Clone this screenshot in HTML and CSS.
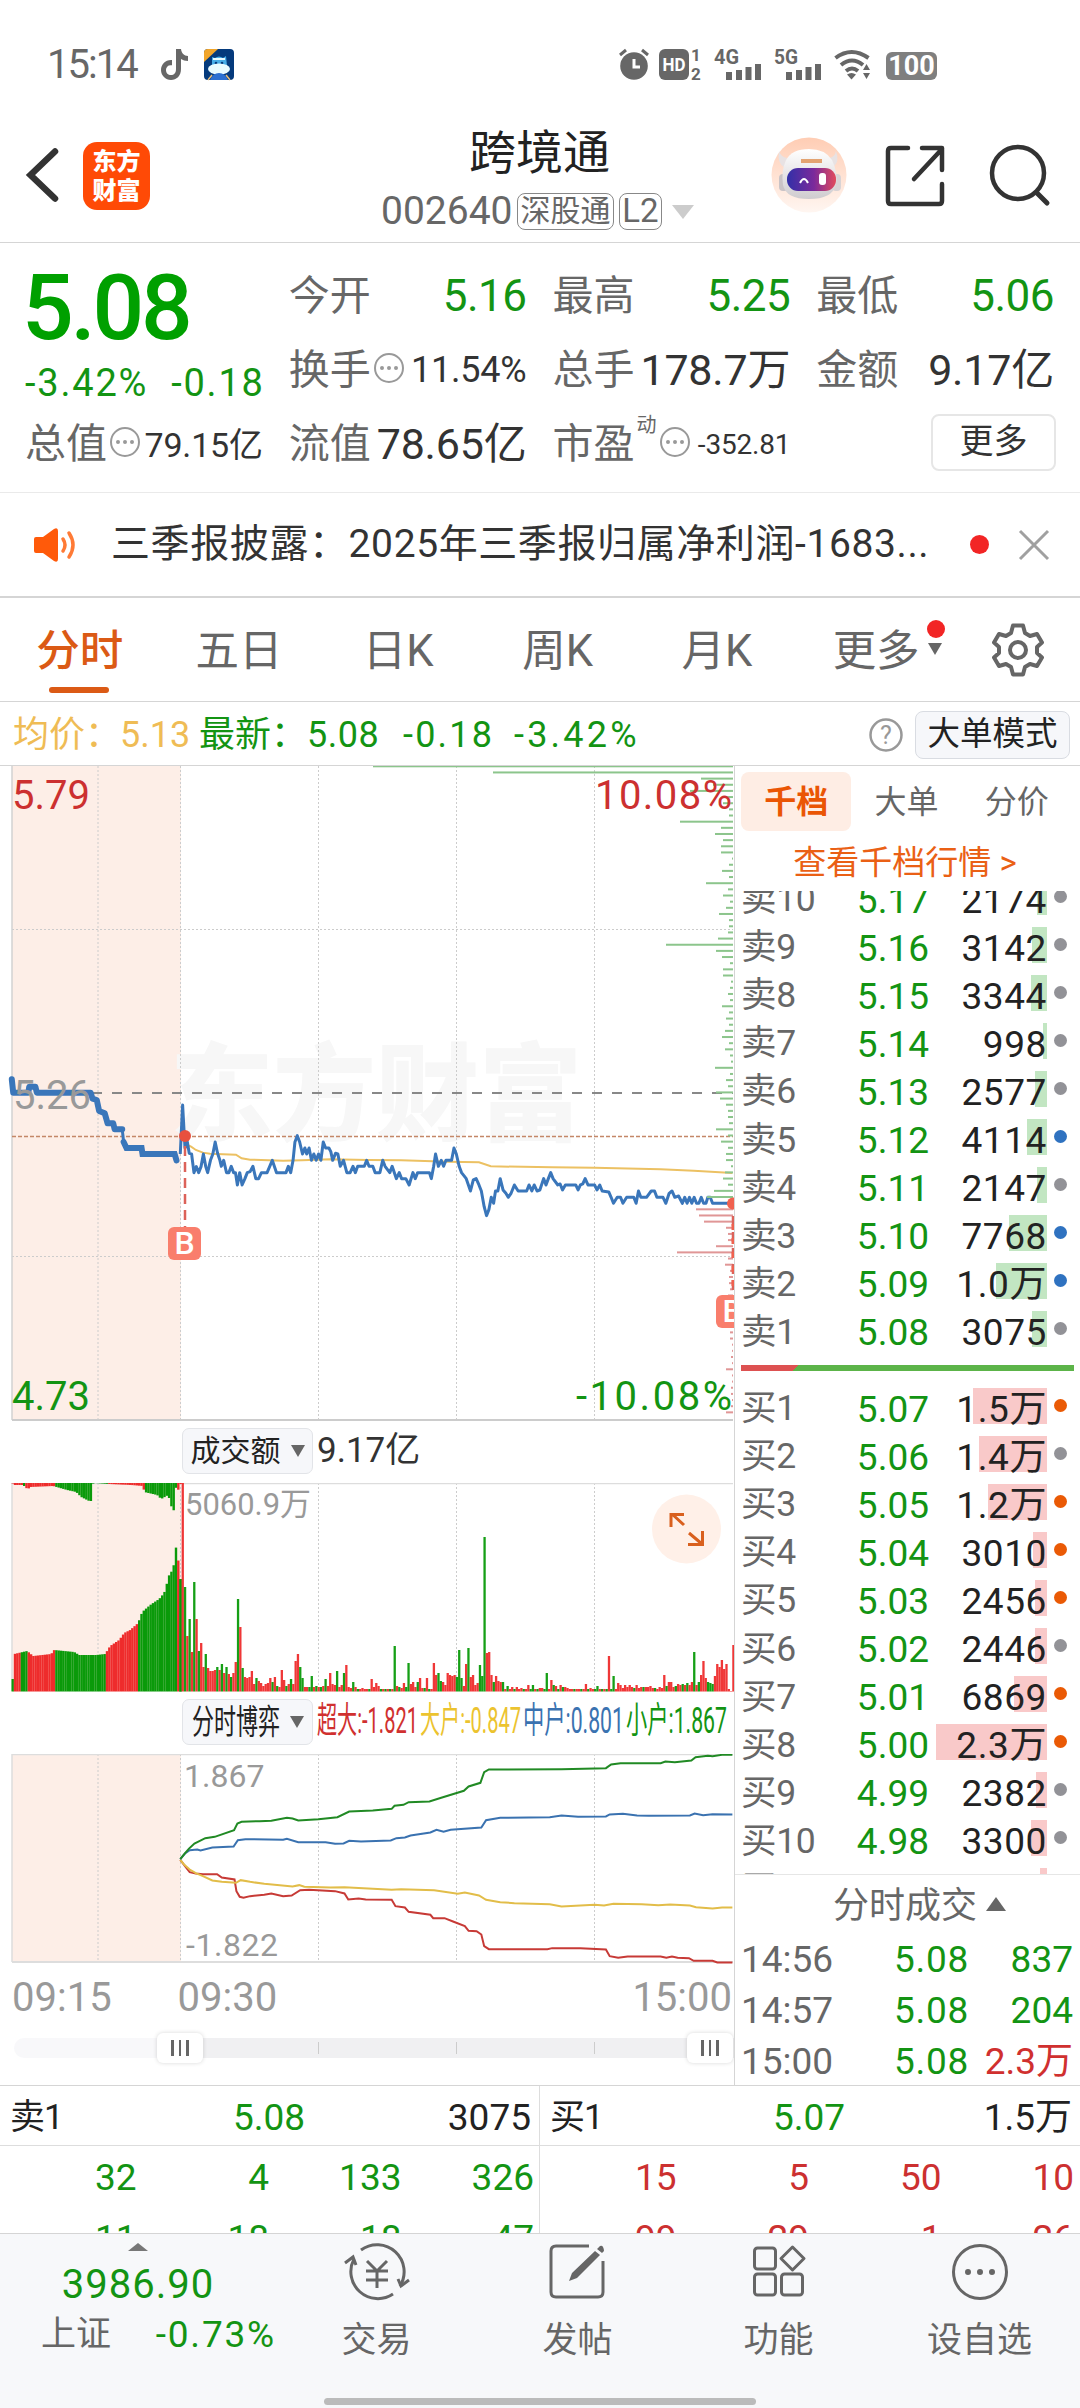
FILE: index.html
```html
<!DOCTYPE html>
<html lang="zh-CN">
<head>
<meta charset="utf-8">
<meta name="viewport" content="width=1080">
<title>跨境通 002640</title>
<link rel="stylesheet" href="styles.css">
</head>
<body>
<div class="status">
  <span class="clock">15:14</span>
  <svg class="tiktok" width="27" height="31" viewBox="0 0 27 31"><path d="M15 0h5c.5 4 3 7 7 7v5c-3 0-5-.7-7-2v10c0 7-4.500 11-10 11S0 26.500 0 21s4.500-10.500 11-10v5.300c-4-.6-6 1.700-6 4.700s2 5 5 5 5-2 5-6z" fill="#676767"/></svg>
  <svg class="mascot" width="30" height="31" viewBox="0 0 30 31"><rect width="30" height="31" rx="4" fill="#053a7c"/><path d="M4 0h10L0 13V4a4 4 0 0 1 4-4z" fill="#f0a52b"/><path d="M8 8l3 1q4-3 8 0l3-2 1 10H8z" fill="#48aee8"/><path d="M9 10h12" stroke="#e9fbff" stroke-width="2"/><circle cx="12" cy="14" r="1.300" fill="#053a7c"/><circle cx="18" cy="14" r="1.300" fill="#053a7c"/><ellipse cx="15" cy="20" rx="11" ry="5.500" fill="#e9fbff"/><path d="M6 31q3-7 9-7t9 7z" fill="#2b6fd0"/><path d="M4 31l4-5M26 31l-4-5" stroke="#e6bd7b" stroke-width="1.500"/></svg>
  <div class="status-right">
    <svg width="30" height="31" viewBox="0 0 30 31"><circle cx="15" cy="17" r="13.800" fill="#676767"/><path d="M1 6l6-5M29 6l-6-5" stroke="#676767" stroke-width="3"/><path d="M15 10v8h6" fill="none" stroke="#fff" stroke-width="3"/></svg>
    <svg width="43" height="31" viewBox="0 0 43 31"><rect width="30" height="31" rx="6" fill="#676767"/><text x="15" y="22" class="hd" textLength="23" lengthAdjust="spacingAndGlyphs">HD</text><text x="37" y="12" class="sim">1</text><text x="37" y="31" class="sim">2</text></svg>
    <svg width="48" height="31" viewBox="0 0 48 31"><text x="0" y="15" class="net" textLength="25" lengthAdjust="spacingAndGlyphs">4G</text><path d="M15 31v-8M25 31v-10M34.500 31v-13M44 31v-16" class="bars"/></svg>
    <svg width="48" height="31" viewBox="0 0 48 31"><text x="0" y="15" class="net" textLength="24" lengthAdjust="spacingAndGlyphs">5G</text><path d="M15 31v-8M25 31v-10M34.500 31v-13M44 31v-16" class="bars"/></svg>
    <svg width="37" height="31" viewBox="0 0 37 31"><path d="M1.500 9q16-12 33 0M7 16q11-9 22 0M12 22q6-5 12 0" fill="none" stroke="#676767" stroke-width="4"/><path d="M13 25.500q4.500-3 9 0l-4.500 5z" fill="#676767"/><path d="M32.500 15l3.500 6h-7zM32.500 30l3.500-6h-7z" fill="#676767"/></svg>
    <div class="battery">100</div>
  </div>
</div>

<header class="head">
  <svg class="back" width="36" height="56" viewBox="0 0 36 56"><path d="M32 4.500L7.500 28 32 51.500" fill="none" stroke="#333" stroke-width="6.500" stroke-linecap="round"/></svg>
  <div class="logo"><span>东方</span><span>财富</span></div>
  <div class="title">
    <h1>跨境通</h1>
    <div class="code"><span class="num">002640</span><span class="tag">深股通</span><span class="tag l2">L2</span><i class="caret"></i></div>
  </div>
  <svg class="robot" width="76" height="78" viewBox="0 0 76 78">
    <defs><linearGradient id="bg" x1="0" y1="0" x2="0" y2="1"><stop offset="0" stop-color="#ffcdb4"/><stop offset="1" stop-color="#fff6f1"/></linearGradient><linearGradient id="visor"><stop offset="0" stop-color="#3230a8"/><stop offset=".55" stop-color="#7b2a9b"/><stop offset="1" stop-color="#e24a5c"/></linearGradient><linearGradient id="shell" x1="0" y1="0" x2="0" y2="1"><stop offset="0" stop-color="#fff"/><stop offset="1" stop-color="#cfcccf"/></linearGradient></defs>
    <circle cx="38" cy="39" r="37.500" fill="url(#bg)"/>
    <path d="M8 15q2 6 8 7l-3 9q-7-4-5-16zM65 15q-1 6-7 7l4 9q7-5 3-16z" fill="#e8e2e3"/>
    <rect x="8" y="38" width="9" height="17" rx="4" fill="#c9c3c6"/><rect x="61" y="38" width="9" height="17" rx="4" fill="#d8d3d5"/>
    <path d="M38 13q16 0 23 11 6 12 4 25-4 14-27 14T12 49q-2-14 3-25 6-11 23-11z" fill="url(#shell)"/>
    <path d="M30 25h21" stroke="#e3a371" stroke-width="4"/>
    <rect x="16" y="32" width="49" height="23" rx="11" fill="url(#visor)"/>
    <path d="M29 47q4-8 8 0" fill="none" stroke="#fff" stroke-width="2"/><rect x="48" y="37" width="7" height="12" rx="3" fill="#fff"/>
  </svg>
  <svg class="share" width="60" height="62" viewBox="0 0 60 62"><path d="M23 3H6q-3 0-3 3v50q0 3 3 3h48q3 0 3-3V39M37 3h20v22M57 4L29 34" fill="none" stroke="#333" stroke-width="4.500" stroke-linecap="round" stroke-linejoin="round"/></svg>
  <svg class="search" width="62" height="64" viewBox="0 0 62 64"><circle cx="29" cy="29" r="26" fill="none" stroke="#333" stroke-width="4.500"/><path d="M48 49l10 10" stroke="#333" stroke-width="5" stroke-linecap="round"/></svg>
</header>

<section class="quote">
  <div class="qcol first">
    <strong class="price">5.08</strong>
    <div class="chg"><span>-3.42%</span><span>-0.18</span></div>
    <div class="cell"><label>总值</label><svg class="more-i" viewBox="0 0 30 30"><circle cx="15" cy="15" r="14"/><path d="M8 15h0M15 15h0M22 15h0"/></svg><b class="s35">79.15亿</b></div>
  </div>
  <div class="qcol">
    <div class="cell"><label>今开</label><b class="g">5.16</b></div>
    <div class="cell"><label>换手</label><svg class="more-i" viewBox="0 0 30 30"><circle cx="15" cy="15" r="14"/><path d="M8 15h0M15 15h0M22 15h0"/></svg><b class="s36">11.54%</b></div>
    <div class="cell"><label>流值</label><b>78.65亿</b></div>
  </div>
  <div class="qcol">
    <div class="cell"><label>最高</label><b class="g">5.25</b></div>
    <div class="cell"><label>总手</label><b>178.7万</b></div>
    <div class="cell"><label>市盈</label><sup>动</sup><svg class="more-i" viewBox="0 0 30 30"><circle cx="15" cy="15" r="14"/><path d="M8 15h0M15 15h0M22 15h0"/></svg><b class="s28">-352.81</b></div>
  </div>
  <div class="qcol">
    <div class="cell"><label>最低</label><b class="g">5.06</b></div>
    <div class="cell"><label>金额</label><b>9.17亿</b></div>
    <div class="cell end"><span class="morebtn">更多</span></div>
  </div>
</section>

<section class="notice">
  <svg width="46" height="36" viewBox="0 0 46 36"><path d="M1 12q0-2 2-2h7L21 2q4-2 4 2v28q0 4-4 2L10 26H3q-2 0-2-2z" fill="#ff5a0a"/><path d="M30 12q4 6 0 12M36 6q8 12 0 24" fill="none" stroke="#ff7a35" stroke-width="3.500" stroke-linecap="round"/></svg>
  <p>三季报披露：2025年三季报归属净利润-1683...</p>
  <i class="dot"></i>
  <svg width="32" height="32" viewBox="0 0 32 32"><path d="M2 2l28 28M30 2L2 30" stroke="#a0a0a0" stroke-width="3"/></svg>
</section>

<nav class="tabs">
  <span class="on">分时</span><span>五日</span><span>日K</span><span>周K</span><span>月K</span><span class="moretab">更多<i class="badge"></i><i class="tri"></i></span>
  <svg width="54" height="54" viewBox="-27 -27 54 54"><path d="M-5-24.500H5L7-17 12-14 19-16 24-7.500 19-3V3L24 7.500 19 16 12 14 7 17 5 24.500H-5L-7 17-12 14-19 16-24 7.500-19 3V-3L-24-7.500-19-16-12-14-7-17z" fill="none" stroke="#666" stroke-width="4" stroke-linejoin="round"/><circle r="8" fill="none" stroke="#666" stroke-width="4"/></svg>
</nav>

<div class="info">
  <span class="avg">均价：</span><span class="avg v1">5.13</span><span class="lat">最新：</span><span class="v2">5.08</span><span class="v3">-0.18</span><span class="v4">-3.42%</span>
  <svg width="34" height="34" viewBox="0 0 34 34"><circle cx="17" cy="17" r="15.500" fill="none" stroke="#999" stroke-width="2.500"/><text x="17" y="26">?</text></svg>
  <span class="mode">大单模式</span>
</div>

<main class="main">
  <div class="charts">
    <svg class="chart" width="735" height="660" viewBox="0 0 735 660">
      <rect x="12" y="0" width="169" height="654" fill="#fdeee7"/>
      <text x="170" y="366" class="mark" textLength="412" lengthAdjust="spacingAndGlyphs">东方财富</text>
      <g class="grid"><path d="M98 0V654M180.500 0V654M318.500 0V654M456.500 0V654M594.500 0V654M12 163.500H733M12 490.500H733"/></g>
      <path d="M12 0V654" stroke="#d2d2d2" stroke-width="1.500"/><path d="M12 654H733" stroke="#ccc" stroke-width="2"/>
      <path d="M92 327H733" stroke="#888" stroke-width="2" stroke-dasharray="10 10"/>
      <path d="M12 370.500H733" stroke="#c48767" stroke-width="1.500" stroke-dasharray="4 2"/>
      <g transform="translate(0 214) scale(.4719 .3333)" class="series">
        <polyline stroke="#ecc163" stroke-width="2" points="392,490 397,495 405,500 415,510 430,518 445,521 500,524 512,535 530,539 600,542 640,541 700,538 780,540 850,541 950,545 1015,547 1040,559 1170,562 1260,563 1400,568 1470,572 1552,579"/>
        <polyline stroke="#3a76ba" stroke-width="6" stroke-linecap="round" stroke-linejoin="round" points="25,298 28,338 60,338 62,320 75,320 78,338 192,338 196,356 205,360 210,393 222,400 228,430 240,430 243,448 259,448"/>
        <polyline stroke="#3a76ba" stroke-width="6" stroke-linecap="round" points="262,486 268,504 300,504 302,522 370,522 374,541"/>
        <polyline stroke="#3a76ba" stroke-width="3" stroke-linejoin="round" points="259,448 262,486 262,486"/>
        <polyline stroke="#3a76ba" stroke-width="3" stroke-linejoin="round" points="382,522 387,375 392,504 397,486 401,520 406,522 411,578 416,560 421,578 426,560 431,522 436,560 440,578 446,541 451,522 456,486 461,520 466,541 469,559 474,541 480,578 485,578 490,559 495,578 499,578 503,615 508,578 513,615 519,596 524,578 530,575 536,559 542,596 548,596 554,578 566,578 577,541 586,578 606,578 611,559 616,578 621,541 625,486 630,467 635,486 641,522 646,504 650,522 655,504 660,541 665,522 670,541 675,522 680,541 685,486 690,504 697,504 701,515 705,541 711,520 716,522 721,559 728,541 735,578 742,578 748,559 753,578 758,559 772,559 777,541 782,559 790,559 795,578 805,578 811,541 816,559 826,578 831,559 840,596 846,578 851,596 860,596 867,615 875,578 880,596 885,578 910,578 914,596 919,559 923,522 929,559 935,541 940,559 945,541 957,541 962,504 967,522 973,559 978,578 988,596 997,633 1003,600 1009,596 1015,615 1020,633 1026,680 1031,707 1036,689 1041,652 1046,670 1050,633 1055,633 1060,596 1066,630 1072,640 1077,652 1083,640 1090,615 1098,633 1116,633 1121,615 1127,633 1132,615 1138,633 1144,630 1152,596 1157,615 1162,596 1167,578 1172,596 1182,615 1187,612 1192,630 1198,615 1220,615 1225,630 1230,615 1235,612 1240,596 1246,615 1260,615 1265,630 1271,615 1276,633 1290,636 1295,652 1300,670 1308,652 1315,652 1320,670 1328,652 1343,652 1348,670 1353,633 1358,652 1370,652 1380,633 1387,633 1392,652 1405,652 1411,670 1418,640 1424,633 1430,652 1438,648 1446,670 1451,652 1456,670 1461,652 1466,670 1471,652 1476,670 1481,670 1486,652 1491,670 1496,670 1500,652 1505,652 1510,670 1552,670"/>
      </g>
      <text x="13" y="343" class="t40" fill="#999">5.26</text>
      <g id="depth"></g>
      <path d="M185 380V461M733 450V528" stroke="#dc6259" stroke-width="2.500" stroke-dasharray="10 6"/>
      <path d="M733 458V520" stroke="#f0614f" stroke-width="3" stroke-dasharray="6 8"/>
      <circle cx="185" cy="370" r="6" fill="#e8503e"/><circle cx="733" cy="437.500" r="6" fill="#f0614f"/>
      <rect x="168" y="461" width="33" height="33" rx="6" fill="#f97e6c"/><text x="184.500" y="488" class="buy">B</text>
      <rect x="716" y="529" width="33" height="33" rx="6" fill="#f97e6c"/><text x="732.500" y="556" class="buy">B</text>
      <text x="12" y="43" class="t40" fill="#cc3030">5.79</text>
      <text x="732" y="43" class="t40 end" fill="#cc3030" textLength="137">10.08%</text>
      <text x="12" y="644" class="t40" fill="#139413">4.73</text>
      <text x="732" y="644" class="t40 end" fill="#139413" textLength="156">-10.08%</text>
    </svg>
    <div class="pick"><span class="btn">成交额<i class="tri"></i></span><span class="amount">9.17亿</span></div>
    <svg class="chart" width="735" height="210" viewBox="0 0 735 210">
      <rect x="12" y="0" width="169" height="208" fill="#fdeee7"/>
      <g class="grid"><path d="M98 0V208M180.500 0V208M318.500 0V208M456.500 0V208M594.500 0V208"/></g>
      <path d="M12 208V.500H733" fill="none" stroke="#ddd" stroke-width="1.500"/>
      <g id="auction"></g><g id="volume"></g>
      <text x="185" y="32" class="t32" textLength="126" lengthAdjust="spacingAndGlyphs">5060.9万</text>
      <circle cx="686.500" cy="46" r="34.500" fill="#fff0e8"/><path d="M684 42L672 31M671 44V31.500H684M689 50L702 61M688 61.500H702.500V48" fill="none" stroke="#d9601e" stroke-width="3"/>
    </svg>
    <div class="pick low"><span class="btn"><svg width="88" height="44" viewBox="0 0 88 44"><text x="0" y="34" font-size="34" fill="#222" textLength="88" lengthAdjust="spacingAndGlyphs">分时博弈</text></svg><i class="tri"></i></span>
      <svg class="legend" width="414" height="44" viewBox="0 0 414 44"><text x="0" y="34" fill="#d0302f" textLength="101" lengthAdjust="spacingAndGlyphs">超大:-1.821</text><text x="103" y="34" fill="#ecc32f" textLength="101" lengthAdjust="spacingAndGlyphs">大户:-0.847</text><text x="206" y="34" fill="#3a72b0" textLength="101" lengthAdjust="spacingAndGlyphs">中户:0.801</text><text x="309" y="34" fill="#139413" textLength="101" lengthAdjust="spacingAndGlyphs">小户:1.867</text></svg></div>
    <svg class="chart" width="735" height="210" viewBox="0 0 735 210">
      <rect x="12" y="0" width="169" height="208" fill="#fdeee7"/>
      <g class="grid"><path d="M98 0V208M180.500 0V208M318.500 0V208M456.500 0V208M594.500 0V208"/></g>
      <path d="M12 208V.500H733" fill="none" stroke="#ddd" stroke-width="1.500"/><path d="M12 208H733" stroke="#ddd" stroke-width="2"/>
      <text x="184" y="33" class="t32">1.867</text><text x="186" y="202" class="t32" textLength="92">-1.822</text>
      <g transform="translate(0 -44.500) scale(.4719 .3333)" class="series" stroke-width="2">
        <polyline stroke="#c73a36" points="382,451 392,470 402,488 415,492 430,494 460,494 470,504 497,510 501,545 508,562 516,565 530,560 560,556 575,552 600,560 618,558 636,542 655,541 710,545 730,552 738,570 760,567 775,570 830,571 838,590 858,594 866,607 912,616 918,626 942,626 960,636 985,650 993,664 1010,665 1020,675 1026,710 1036,719 1160,719 1170,716 1230,716 1284,720 1292,740 1310,745 1330,741 1400,741 1412,745 1424,741 1436,745 1460,746 1470,754 1510,754 1520,759 1552,759"/>
        <polyline stroke="#e2bd49" points="382,451 390,465 402,480 415,491 430,500 450,513 470,517 500,520 510,512 530,517 560,523 620,531 634,527 645,532 700,534 730,533 790,538 830,541 850,539 920,542 970,553 985,549 1015,558 1030,571 1060,578 1090,581 1165,584 1190,591 1260,586 1280,588 1300,583 1360,584 1395,587 1420,585 1462,588 1475,593 1510,597 1530,594 1552,594"/>
        <polyline stroke="#3a72b0" points="382,449 392,432 402,422 418,420 425,423 450,414 495,411 504,392 520,389 600,391 608,388 632,398 690,398 710,403 728,402 740,394 765,396 828,393 840,386 858,384 870,378 912,369 925,361 940,367 955,361 1020,354 1030,332 1060,325 1165,323 1190,318 1225,322 1284,321 1292,315 1320,313 1350,318 1375,319 1462,318 1472,312 1490,317 1510,314 1552,315"/>
        <polyline stroke="#218a24" points="382,449 390,435 400,418 412,402 435,386 455,382 496,362 503,342 512,337 550,335 575,334 608,325 620,327 632,333 675,329 715,323 740,306 790,303 830,298 836,289 855,286 866,278 910,276 935,265 983,244 993,231 1018,220 1026,188 1036,180 1190,179 1284,176 1295,165 1315,161 1400,161 1410,156 1430,158 1465,153 1474,143 1500,139 1510,140 1530,136 1552,136"/>
      </g>
    </svg>
    <div class="axis"><span>09:15</span><span class="mid">09:30</span><span>15:00</span></div>
    <div class="slider"><div class="rail"><i></i><i></i><i></i></div><b class="knob left"><u></u><u></u><u></u></b><b class="knob right"><u></u><u></u><u></u></b></div>
  </div>

  <aside class="book">
    <div class="btabs"><span class="on">千档</span><span>大单</span><span>分价</span></div>
    <div class="link">查看千档行情 &gt;</div>
    <div class="levels sell">
      <div class="lv"><span>卖10</span><b>5.17</b><em>2174</em><i style="width:10px"></i><u></u></div>
      <div class="lv"><span>卖9</span><b>5.16</b><em>3142</em><i style="width:15px"></i><u></u></div>
      <div class="lv"><span>卖8</span><b>5.15</b><em>3344</em><i style="width:16px"></i><u></u></div>
      <div class="lv"><span>卖7</span><b>5.14</b><em>998</em><i style="width:4px"></i><u></u></div>
      <div class="lv"><span>卖6</span><b>5.13</b><em>2577</em><i style="width:12px"></i><u></u></div>
      <div class="lv"><span>卖5</span><b>5.12</b><em>4114</em><i style="width:20px"></i><u class="blue"></u></div>
      <div class="lv"><span>卖4</span><b>5.11</b><em>2147</em><i style="width:10px"></i><u></u></div>
      <div class="lv"><span>卖3</span><b>5.10</b><em>7768</em><i style="width:38px"></i><u class="blue"></u></div>
      <div class="lv"><span>卖2</span><b>5.09</b><em>1.0万</em><i style="width:51px"></i><u class="blue"></u></div>
      <div class="lv"><span>卖1</span><b>5.08</b><em>3075</em><i style="width:15px"></i><u></u></div>
    </div>
    <div class="ratio"></div>
    <div class="levels bid">
      <div class="lv"><span>买1</span><b>5.07</b><em>1.5万</em><i style="width:74px"></i><u class="org"></u></div>
      <div class="lv"><span>买2</span><b>5.06</b><em>1.4万</em><i style="width:68px"></i><u></u></div>
      <div class="lv"><span>买3</span><b>5.05</b><em>1.2万</em><i style="width:59px"></i><u class="org"></u></div>
      <div class="lv"><span>买4</span><b>5.04</b><em>3010</em><i style="width:14px"></i><u class="org"></u></div>
      <div class="lv"><span>买5</span><b>5.03</b><em>2456</em><i style="width:12px"></i><u class="org"></u></div>
      <div class="lv"><span>买6</span><b>5.02</b><em>2446</em><i style="width:12px"></i><u></u></div>
      <div class="lv"><span>买7</span><b>5.01</b><em>6869</em><i style="width:33px"></i><u class="org"></u></div>
      <div class="lv"><span>买8</span><b>5.00</b><em>2.3万</em><i style="width:111px"></i><u class="org"></u></div>
      <div class="lv"><span>买9</span><b>4.99</b><em>2382</em><i style="width:11px"></i><u></u></div>
      <div class="lv"><span>买10</span><b>4.98</b><em>3300</em><i style="width:16px"></i><u></u></div>
      <div class="lv"><span>买11</span><b></b><em></em><i style="width:7px"></i></div>
    </div>
    <div class="dealhead">分时成交<i></i></div>
    <div class="deal"><span>14:56</span><b>5.08</b><em>837</em></div>
    <div class="deal"><span>14:57</span><b>5.08</b><em>204</em></div>
    <div class="deal"><span>15:00</span><b>5.08</b><em class="up">2.3万</em></div>
  </aside>
</main>

<section class="queue">
  <div class="side">
    <div class="qh"><span>卖1</span><b>5.08</b><em>3075</em></div>
    <div class="qr"><span>32</span><span>4</span><span>133</span><span>326</span></div>
    <div class="qr"><span>11</span><span>18</span><span>18</span><span>47</span></div>
  </div>
  <div class="side red">
    <div class="qh"><span>买1</span><b>5.07</b><em>1.5万</em></div>
    <div class="qr"><span>15</span><span>5</span><span>50</span><span>10</span></div>
    <div class="qr"><span>99</span><span>29</span><span>1</span><span>26</span></div>
  </div>
</section>

<footer class="foot">
  <div class="index"><i></i><b>3986.90</b><div><span>上证</span><em>-0.73%</em></div></div>
  <div class="fi"><svg width="66" height="58" viewBox="0 0 66 58"><g fill="none" stroke="#666" stroke-width="3"><path d="M17 7A27 27 0 0 1 56 43M49 51A27 27 0 0 1 10 16"/><path d="M1 20L9 14 12 22M65 37L57 43 54 36M23 18L33 28 43 18M33 28V45M22 28H44M22 37H44"/></g></svg><span>交易</span></div>
  <div class="fi"><svg width="66" height="58" viewBox="0 0 66 58"><path d="M44 3H11Q6 3 6 8V49Q6 54 11 54H53Q58 54 58 49V18" fill="none" stroke="#666" stroke-width="3"/><path d="M50 8L55 12 32 35 24 38 27 30zM52 6L55 3Q57 2 58 4T59 8L57 10z" fill="#666"/></svg><span>发帖</span></div>
  <div class="fi"><svg width="66" height="58" viewBox="0 0 66 58"><g fill="none" stroke="#666" stroke-width="3"><rect x="8.500" y="5" width="21" height="21" rx="3"/><rect x="8.500" y="31" width="21" height="21" rx="3"/><rect x="35.500" y="31" width="21" height="21" rx="3"/><path d="M46.500 4L58 15.500 46.500 27 35 15.500z" stroke-linejoin="round"/></g></svg><span>功能</span></div>
  <div class="fi"><svg width="66" height="58" viewBox="0 0 66 58"><circle cx="33" cy="29" r="26.500" fill="none" stroke="#666" stroke-width="3"/><path d="M21 29h0M33 29h0M45 29h0" stroke="#666" stroke-width="6" stroke-linecap="round"/></svg><span>设自选</span></div>
  <div class="home"></div>
</footer>
<script src="charts.js"></script>
</body>
</html>
```
FILE: styles.css
```css
* { box-sizing: border-box; }
body { margin: 0; width: 1080px; height: 2408px; overflow: hidden; background: #fff; color: #333; font-family: Roboto, "Noto Sans CJK SC", sans-serif; font-size: 37px; line-height: 1; }
b, em, i, u, strong, h1 { font-weight: 400; font-style: normal; text-decoration: none; margin: 0; }
svg { display: block; flex: none; overflow: visible; }
svg.chart { overflow: hidden; }
span, b, em, label { white-space: nowrap; }

.status { height: 110px; display: flex; align-items: center; padding: 18px 143px 0 47px; color: #676767; }
.clock { font-size: 40px; letter-spacing: -2px; width: 114px; padding-top: 2px; }
.mascot { margin-left: 16px; }
.status-right { margin-left: auto; display: flex; align-items: center; gap: 10px; }
.status-right svg:nth-child(n+3) { margin-left: 2px; }
.battery { width: 51px; height: 28px; margin-left: 5px; margin-top: 3px; background: #7f7f7f; border-radius: 6px; color: #fff; font-size: 27px; font-weight: 700; line-height: 28px; text-align: center; }
.hd { font: 700 19px Roboto; fill: #fff; text-anchor: middle; }
.sim { font: 700 17px Roboto; fill: #676767; text-anchor: middle; }
.net { font: 700 21px Roboto; fill: #676767; }
.bars { stroke: #676767; stroke-width: 6; }

.head { height: 133px; border-bottom: 1px solid #d5d5d5; display: flex; padding-left: 23px; }
.back { margin-top: 37px; }
.logo { margin: 32px 0 0 24px; width: 67px; height: 68px; border-radius: 14px; background: #ff4a06; color: #fff; font-size: 24px; font-weight: 900; display: flex; flex-direction: column; align-items: center; justify-content: center; gap: 5px; }
.title { width: 340px; margin-left: 221px; text-align: center; padding-top: 17px; }
h1 { font-size: 47px; line-height: 52px; color: #222; padding-right: 3px; }
.code { display: flex; align-items: center; color: #676767; height: 37px; margin: 14px 0 0 10px; }
.code .num { font-size: 39px; width: 136px; text-align: left; }
.tag { width: 97px; height: 37px; border: 1.500px solid #888; border-radius: 8px; font-size: 30px; line-height: 34px; text-align: center; }
.tag.l2 { width: 43px; margin-left: 5px; font-size: 33px; }
.caret { border: 11px solid transparent; border-top: 14px solid #ccc; border-bottom: 0; margin-left: 10px; }
.robot { margin: 26px 0 0 60px; }
.share { margin: 35px 0 0 38px; }
.search { margin: 34px 0 0 44px; }

.quote { height: 250px; border-bottom: 1px solid #eaeaea; display: flex; gap: 26px; padding: 16px 26px 0 25px; }
.qcol { width: 238px; display: flex; flex-direction: column; }
.cell { height: 74.300px; display: flex; align-items: center; flex: none; }
.cell label { font-size: 41px; color: #676767; }
.cell b { margin-left: auto; font-size: 43px; letter-spacing: -.2px; }
.cell .g { color: #139413; letter-spacing: -.5px; font-size: 44px; }
.cell .s35 { font-size: 34px; } .cell .s36 { font-size: 36px; } .cell .s28 { font-size: 28px; }
.cell.end { justify-content: flex-end; }
.cell sup { font-size: 20px; line-height: 22px; align-self: flex-start; margin: 6px 0 0 2px; color: #676767; }
.more-i { width: 30px; height: 30px; margin: -5px 0 0 3px; fill: none; stroke: #999; stroke-width: 2; }
.more-i path { stroke-width: 4; stroke-linecap: round; }
.price { color: #00a000; font-size: 91px; font-weight: 500; line-height: 84px; height: 88px; padding-top: 7px; letter-spacing: -3.200px; margin-left: -3px; }
.chg { height: 60.600px; display: flex; justify-content: space-between; align-items: center; color: #139413; font-size: 38px; padding: 22px 0 11px 0; letter-spacing: 1.800px; margin-right: -2px; }
.morebtn { width: 125px; height: 57px; border: 2px solid #e6e6e6; border-radius: 8px; font-size: 34px; line-height: 51px; text-align: center; margin: -5px -2px 0 0; }

.notice { height: 105px; border-bottom: 2px solid #d5d5d5; display: flex; align-items: center; padding: 0 30px 0 33px; }
.notice p { margin: 0 auto 0 32px; font-size: 39px; white-space: nowrap; letter-spacing: .6px; }
.dot { width: 19px; height: 19px; border-radius: 50%; background: #f22525; margin-right: 29px; }

.tabs { height: 104px; border-bottom: 1px solid #d5d5d5; display: flex; align-items: center; color: #666; font-size: 43.500px; }
.tabs span { width: 159.300px; height: 100%; line-height: 108px; text-align: center; position: relative; }
.tabs .on { color: #db5a15; font-weight: 500; }
.tabs .on::after { content: ""; position: absolute; left: 49px; bottom: 8px; width: 60px; height: 6px; border-radius: 3px; background: #db5a15; }
.tabs svg { margin: 0 0 0 35px; }
.badge { position: absolute; left: 131px; top: 22px; width: 18px; height: 18px; border-radius: 50%; background: #f22525; }
.tri { border: 7.500px solid transparent; border-top: 12px solid #666; border-bottom: 0; }
.moretab .tri { position: absolute; left: 132px; top: 45px; }

.info { height: 63px; display: flex; align-items: center; font-size: 36px; color: #139413; padding: 2px 10px 0 13px; }
.info .avg { color: #efbc55; width: 107px; } .info .v1 { width: 79px; }
.lat { width: 108px; } .v2 { width: 96px; letter-spacing: .5px; } .v3 { width: 111px; letter-spacing: 2.200px; } .v4 { letter-spacing: 3.200px; }
.info svg { margin-left: auto; margin-right: 12px; } .info svg text { font-size: 25px; fill: #999; text-anchor: middle; }
.mode { width: 155px; height: 48px; border: 1.500px solid #d9dce2; border-radius: 8px; background: #f6f7fa; color: #222; font-size: 32.500px; line-height: 44px; text-align: center; }

.main { height: 1321px; border-top: 1px solid #d5d5d5; border-bottom: 1px solid #d5d5d5; display: flex; }
.charts { width: 735px; border-right: 1px solid #d5d5d5; overflow: hidden; }
.grid path { fill: none; stroke: #ccc; stroke-width: 1; stroke-dasharray: 2 2; }
.series { fill: none; }
.series polyline { vector-effect: non-scaling-stroke; }
.mark { font-size: 106px; font-weight: 900; fill: #f7f7f7; }
.t40 { font-size: 40px; } .t32 { font-size: 32px; fill: #999; } .end { text-anchor: end; }
.buy { font-size: 32px; font-weight: 500; fill: #fff; text-anchor: middle; }
.pick { height: 57px; display: flex; padding: 2px 0 0 182px; }
.btn { width: 131px; height: 46px; border: 1px solid #e2e4e8; border-radius: 7px; background: #f6f7fa; color: #222; font-size: 30px; display: flex; align-items: center; justify-content: center; gap: 10px; }
.amount { font-size: 35px; line-height: 45px; margin-left: 4px; }
.low { height: 61px; padding-top: 6px; }
.legend { margin-left: 4px; font-size: 36px; }
.axis { display: flex; height: 69px; font-size: 40px; line-height: 67px; color: #999; padding: 0 2px 0 12px; }
.axis .mid { margin: 0 auto 0 66px; }
.slider { position: relative; height: 30px; padding: 5px 0 0 14px; }
.rail { height: 20px; border-radius: 10px 0 0 10px; background: linear-gradient(90deg, #f8f8fa 166px, #f0f0f2 166px); padding: 4px 0 0 304px; display: flex; gap: 137px; }
.rail i { width: 1px; height: 12px; background: #ccc; }
.knob { position: absolute; top: 0; width: 46px; height: 30px; border-radius: 6px; background: #fff; box-shadow: 0 0 4px rgba(0,0,0,.16); display: flex; justify-content: center; align-items: center; gap: 5px; }
.left { left: 157px; } .right { left: 687px; }
.knob u { width: 2.500px; height: 16px; background: #666; }

.book { width: 345px; display: flex; flex-direction: column; overflow: hidden; }
.book > div { flex: none; }
.btabs { height: 70px; padding: 6px 8px 5px 6px; display: flex; font-size: 32px; color: #666; }
.btabs span { width: 111px; line-height: 61px; text-align: center; }
.btabs .on { background: #feede4; border-radius: 8px; color: #ea5504; font-weight: 700; }
.link { color: #ea6015; font-size: 33px; height: 55px; line-height: 53px; text-align: center; padding-right: 5px; }
.levels { overflow: hidden; }
.sell { height: 465px; }
.sell .lv:first-child { margin-top: -16px; }
.lv { height: 48.050px; display: flex; align-items: center; position: relative; padding: 2px 33px 0 6px; color: #222; }
.lv span { font-size: 35.500px; width: 111px; color: #676767; letter-spacing: -.3px; }
.lv b { width: 77px; color: #139413; text-align: right; }
.lv em { margin-left: auto; position: relative; z-index: 1; letter-spacing: .6px; }
.lv i { position: absolute; right: 33px; top: 4px; height: 36px; background: #c2e6c2; }
.bid .lv i { background: #f9c9c9; }
.lv u { position: absolute; right: 13px; top: 15px; width: 13px; height: 13px; border-radius: 50%; background: #929297; }
.lv .blue { background: #2f72c0; } .lv .org { background: #ea5a05; }
.ratio { height: 6px; margin: 9px 6px 0; background: linear-gradient(135deg, #dd5151 41px, #5cb449 41px); }
.bid { height: 504px; padding-top: 13px; border-bottom: 1px solid #e6e6e6; }
.dealhead { height: 59px; display: flex; justify-content: center; align-items: center; gap: 9px; font-size: 36px; color: #676767; padding: 2px 0 0 24px; }
.dealhead i { border: 10.500px solid transparent; border-bottom: 14px solid #666; border-top: 0; margin-bottom: 4px; }
.deal { height: 51.100px; display: flex; align-items: center; padding: 0 7px 0 6px; font-size: 37px; color: #139413; }
.deal span { width: 153px; color: #676767; } .deal b { letter-spacing: .7px; } .deal em { margin-left: auto; } .deal .up { color: #d0302f; }

.queue { height: 147px; overflow: hidden; display: flex; }
.side { width: 540px; border-right: 1px solid #ddd; color: #139413; font-size: 37px; }
.qh { height: 60px; border-bottom: 1px solid #ddd; display: flex; align-items: center; padding: 3px 8px 0 10px; color: #222; }
.qh span { width: 223px; font-size: 35px; letter-spacing: -1px; } .qh b { color: #139413; } .qh em { margin-left: auto; }
.qr { display: grid; grid-template-columns: repeat(4, 132.500px); height: 60.500px; line-height: 64px; text-align: right; padding-left: 4px; }
.red { color: #cc3030; border: 0; }

.foot { height: 175px; background: #f7f8fa; border-top: 1px solid #d5d5d5; position: relative; display: flex; color: #666; font-size: 35px; }
.index { width: 276px; display: flex; flex-direction: column; align-items: center; color: #139413; }
.index i { border: 10px solid transparent; border-bottom: 8px solid #777; border-top: 0; margin-top: 9px; }
.index b { font-size: 40px; margin-top: 14px; letter-spacing: 1px; line-height: 40px; }
.index div { display: flex; width: 276px; padding-left: 41px; justify-content: space-between; margin-top: 11px; line-height: 38px; }
.index span { color: #666; } .index em { font-size: 37px; letter-spacing: 1.800px; }
.fi { width: 201px; display: flex; flex-direction: column; align-items: center; padding-top: 9px; gap: 21px; }
.fi span { line-height: 38px; }
.home { position: absolute; left: 324px; bottom: 3px; width: 432px; height: 7px; border-radius: 4px; background: #bbb; }
```
FILE: charts.js
```javascript
const NS = 'http://www.w3.org/2000/svg';
const RED = '#ee2c2c', GREEN = '#0a9a0a';

function bar(host, x, y, w, h, fill, opacity) {
  const r = document.createElementNS(NS, 'rect');
  r.setAttribute('x', x.toFixed(2));
  r.setAttribute('y', y.toFixed(2));
  r.setAttribute('width', w.toFixed(2));
  r.setAttribute('height', Math.max(0, h).toFixed(2));
  r.setAttribute('fill', fill);
  if (opacity) r.setAttribute('opacity', opacity);
  host.appendChild(r);
}

// Order depth for each price tick, from the daily limit downwards.
const depth = [360,240,32,20,43,10,10,4,4,53,12,18,10,12,12,1,4,11,4,27,5,10,3,7,14,4,4,5,15,67,17,11,3,10,10,2,3,5,3,11,4,7,4,8,11,4,8,3,2,18,3,7,5,17,13,7,5,5,4,17,5,12,5,7,7,2,8,10,5,19,26,0,37,34,29,7,5,5,17,56,5,8,3,4,4,3,5,1,1,1,2,1,3,3,1,1,2,1,7,1,1,2,2,1,2,7];
const depthHost = document.getElementById('depth');
depth.forEach((w, i) => bar(depthHost, 733 - w, i * 6.153 - 0.7, w, 2, i < 72 ? '#8cc58c' : '#e09696'));

// Turnover per minute, as bar tops in a 208-unit panel; r = up, g = down.
const turnover = '96g 0r 104g 153r 136g 169r 99g 136r 168g 160r 184r 171g 185r 188r 188r 187r 184g 187r 181g 190r 184g 191r 194g 190r 179r 116g 144r 185g 194r 195r 194r 188r 201r 195g 198r 200r 203r 201r 200r 195r 199g 194r 203g 204r 187r 197r 203g 201r 196g 201r 178r 171r 184g 195g 204r 204r 204g 193g 204r 203g 204r 204g 203r 196g 203r 190r 201r 202r 188g 204r 202r 190g 182r 204r 205r 199g 204r 206g 206r 205r 206r 206r 206g 196r 204r 200r 203r 206g 206r 206g 206r 206g 206r 163g 203r 204g 205r 200r 204g 180g 201r 199r 204r 199g 195r 205r 205g 195r 206g 206r 180r 192r 190g 198g 199r 202r 190r 192r 193r 192r 194g 167g 195g 203r 181r 165g 194r 192r 202r 200r 182g 193g 54g 170r 169r 192r 199g 193r 198r 199r 199g 206r 203g 206r 204r 206g 204r 206r 205r 206g 206r 202r 206g 202g 206r 206g 205r 205r 206g 190g 206r 197r 202g 203r 206g 202r 204g 204r 205r 206r 206r 206g 206r 206r 206g 206r 201r 206g 205r 206r 206g 203g 206r 206g 206r 206g 173r 206g 193g 206r 200r 202r 205r 202r 204r 202r 204r 205g 202r 205r 204r 204g 204r 204r 203r 205r 205g 206r 204r 205r 192r 203g 199r 199r 204r 203g 201r 202r 201g 202r 200g 202r 199r 169g 202r 199g 192r 178r 195r 199g 200g 201g 193r 181r 184r 177r 186r 181r 206r 208r 162r'.split(' ');
const volumeHost = document.getElementById('volume');
turnover.forEach((t, i) => {
  const top = parseFloat(t);
  bar(volumeHost, 179.300 + i * 2.304, top, 2.3, 208.500 - top, t.endsWith('r') ? RED : GREEN, .95);
});

// Opening auction: matched amount from the bottom, unmatched from the top.
const matched = [[11.5,196],[13,171],[26,168],[32,173],[50,171],[53,167],[73,169],[78,172],[95,172],[104,171],[109,163],[118,157],[123,150],[129,147],[137,140],[141,129],[149,122],[158,116],[163,110],[165,103],[168,92],[172,86],[174,71],[176,55],[178,96],[181,96]];
const unmatched = [[11,0],[13,2],[22,2],[25,5],[27,6],[29,4],[52,3],[66,7],[75,9],[80,14],[88,18],[90.5,18],[90.6,1],[94,0],[108,1],[130,2],[142,3],[143,9],[156,12],[160,16],[167,12],[170,22],[172,35],[174,4],[177,7],[179,1],[181,1]];
function redAt(x, hanging) {
  if (hanging) return x < 23 || (x > 25 && x < 53) || (x > 107 && x < 143) || x > 176;
  return (x > 13 && x < 19) || (x > 26 && x < 53) || (x > 104 && x < 137) || (x > 176 && x < 178.500);
}
function at(points, x) {
  for (let i = points.length - 1; i >= 0; i--) {
    if (x >= points[i][0]) {
      const n = points[i + 1];
      return n ? points[i][1] + (n[1] - points[i][1]) * (x - points[i][0]) / (n[0] - points[i][0]) : points[i][1];
    }
  }
  return 0;
}
const auctionHost = document.getElementById('auction');
for (let x = 11.5; x < 180; x += 2.3) {
  const top = at(matched, x);
  bar(auctionHost, x, top, 2.4, 208.500 - top, redAt(x, false) ? RED : GREEN);
  bar(auctionHost, x, 0, 2.4, at(unmatched, x), redAt(x, true) ? RED : GREEN);
}
```
